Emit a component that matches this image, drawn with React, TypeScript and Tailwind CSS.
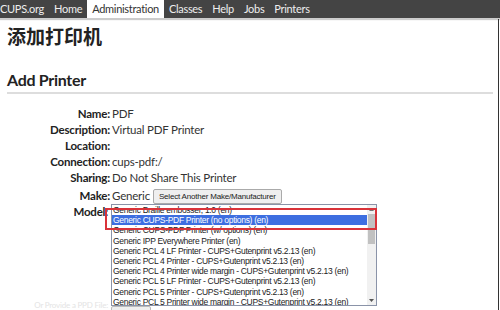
import React from "react";

const tabs = ["CUPS.org", "Home", "Administration", "Classes", "Help", "Jobs", "Printers"];

const fields = [
  { label: "Name:", value: "PDF" },
  { label: "Description:", value: "Virtual PDF Printer" },
  { label: "Location:", value: "" },
  { label: "Connection:", value: "cups-pdf:/" },
  { label: "Sharing:", value: "Do Not Share This Printer" },
];

const models = [
  "Generic Braille embosser, 1.0 (en)",
  "Generic CUPS-PDF Printer (no options) (en)",
  "Generic CUPS-PDF Printer (w/ options) (en)",
  "Generic IPP Everywhere Printer (en)",
  "Generic PCL 4 LF Printer - CUPS+Gutenprint v5.2.13 (en)",
  "Generic PCL 4 Printer - CUPS+Gutenprint v5.2.13 (en)",
  "Generic PCL 4 Printer wide margin - CUPS+Gutenprint v5.2.13 (en)",
  "Generic PCL 5 LF Printer - CUPS+Gutenprint v5.2.13 (en)",
  "Generic PCL 5 Printer - CUPS+Gutenprint v5.2.13 (en)",
  "Generic PCL 5 Printer wide margin - CUPS+Gutenprint v5.2.13 (en)",
];

export default function App() {
  return (
    <div className="relative w-[500px] h-[310px] overflow-hidden bg-white text-[#222] font-['Lato','Open_Sans',sans-serif]">
      {/* top navigation */}
      <nav className="flex h-[18px] bg-[#444] text-[11px] tracking-[-0.3px] leading-[18px] text-[#eee] shadow-[0_2px_1px_#ccc]">
        {tabs.map((t, i) => (
          <span
            key={t}
            className={
              t === "Administration"
                ? "px-[5px] bg-white text-[#333]"
                : i === 0
                ? "pr-[5px]"
                : "px-[5px]"
            }
          >
            {t}
          </span>
        ))}
      </nav>

      <main className="px-[7px]">
        <h1 className="mt-[5px] text-[19px] leading-[26px] font-bold font-['Noto_Sans_CJK_SC',sans-serif]">添加打印机</h1>

        <h2 className="mt-[20px] text-[16px] tracking-[-0.3px] leading-[22px] font-bold border-b-2 border-[#ddd] pb-[1px]">Add Printer</h2>

        {/* form */}
        <div className="mt-[12px] text-[11.5px] tracking-[-0.2px] leading-[16px]">
          {fields.map((f) => (
            <div key={f.label} className="flex">
              <div className="w-[105px] shrink-0 text-right font-bold pr-[2px]">{f.label}</div>
              <div className="text-[#333]">{f.value}</div>
            </div>
          ))}

          <div className="flex items-center mt-[2px]">
            <div className="w-[105px] shrink-0 text-right font-bold pr-[2px]">Make:</div>
            <div className="flex items-center gap-[3px] text-[#333]">
              <span>Generic</span>
              <button className="h-[15px] px-[5px] bg-[#efefef] border border-[#aaa] rounded-[2px] text-[8px] tracking-[-0.2px] leading-[13px] text-[#222] font-['Liberation_Sans',Arial,sans-serif]">
                Select Another Make/Manufacturer
              </button>
            </div>
          </div>

          <div className="flex">
            <div className="w-[104px] shrink-0 text-right font-bold pr-[3px]">Model:</div>
            <div className="relative">
              <div className="flex w-[266px] h-[102px] overflow-hidden border border-[#8a93a8] bg-white">
                <div className="flex-1 min-w-0 font-['Liberation_Sans',Arial,sans-serif] text-[8.5px] tracking-[-0.3px] leading-[10.2px] text-[#222]">
                  {models.map((m, i) => (
                    <div
                      key={m}
                      className={
                        i === 1
                          ? "h-[10.2px] pl-[1px] bg-[#3d6ee0] text-white whitespace-nowrap overflow-hidden"
                          : "h-[10.2px] pl-[1px] whitespace-nowrap overflow-hidden"
                      }
                    >
                      {m}
                    </div>
                  ))}
                </div>
                {/* scrollbar */}
                <div className="w-[9px] shrink-0 flex flex-col bg-[#f1f1f1]">
                  <div className="h-[9px] flex items-center justify-center text-[#777]">
                    <svg width="5" height="3" viewBox="0 0 5 3"><path d="M0 3 L2.5 0 L5 3 Z" fill="currentColor" /></svg>
                  </div>
                  <div className="mx-[1px] h-[30px] bg-[#c1c1c1]" />
                  <div className="flex-1" />
                  <div className="h-[9px] flex items-center justify-center text-[#555]">
                    <svg width="5" height="3" viewBox="0 0 5 3"><path d="M0 0 L2.5 3 L5 0 Z" fill="currentColor" /></svg>
                  </div>
                </div>
              </div>
              {/* red highlight annotation */}
              <div className="absolute left-[-6px] top-[4px] w-[272px] h-[22px] border-2 border-[#d9333a]" />
            </div>
          </div>

          <div className="flex items-start">
            <div className="w-[104px] shrink-0 -mt-[5px] text-right pr-[3px] text-[8px] leading-[9px] text-[#e4e4e4] whitespace-nowrap">Or Provide a PPD File:</div>
            <button className="h-[15px] w-[40px] bg-[#efefef] border border-[#bbb] rounded-[2px]" />
          </div>
        </div>
      </main>

      <div className="absolute right-[1px] top-[19px] bottom-0 w-[1.5px] bg-[#333]" />
    </div>
  );
}
